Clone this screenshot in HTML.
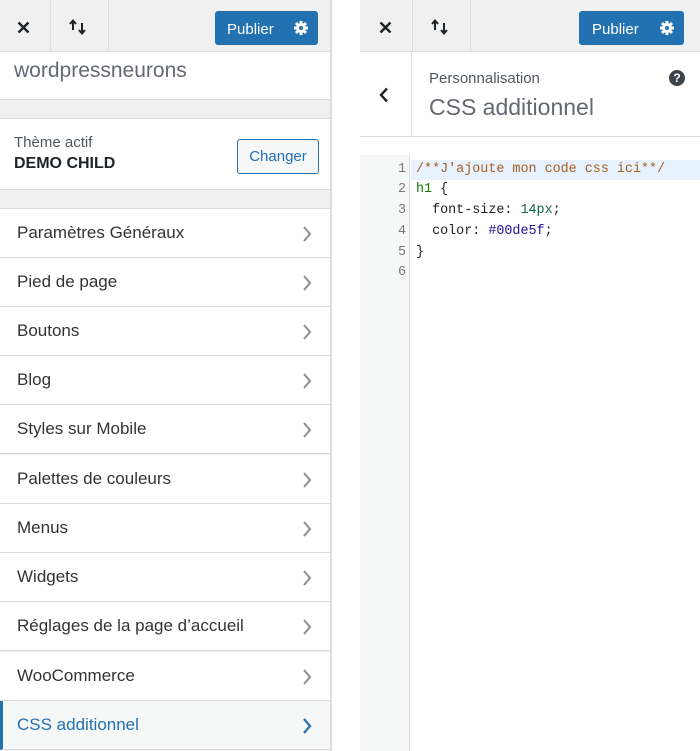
<!DOCTYPE html>
<html><head><meta charset="utf-8"><style>
*{margin:0;padding:0;box-sizing:border-box}
body{width:700px;height:751px;overflow:hidden;background:#fff;font-family:"Liberation Sans","DejaVu Sans",sans-serif;position:relative;color:#3c434a}
.abs{position:absolute}
.hdr{background:#f0f0f1;height:52px;border-bottom:1px solid #dcdcde}
.sep{position:absolute;top:0;width:1px;height:52px;background:#dcdcde}
.pub{position:absolute;top:11px;height:34px;background:#2271b1;border-radius:3px;color:#fff;font-size:15px;display:flex;align-items:center;padding-left:12px;padding-top:2px}
.item{position:absolute;left:0;width:330px;height:49px;border-bottom:1px solid #dcdcde;background:#fff;font-size:17px;line-height:48px;padding-left:17px;color:#333}
.chev{position:absolute;right:18px;top:17px}
.code{position:absolute;left:416px;font-family:"Liberation Mono","DejaVu Sans Mono",monospace;font-size:13.4px;color:#222;white-space:pre}
.ln{position:absolute;left:360px;width:46px;text-align:right;font-family:"Liberation Mono",monospace;font-size:13.4px;color:#777}
</style></head><body>
<div class="abs" style="left:0;top:0;width:332px;height:751px;background:#f0f0f1;border-right:2px solid #dcdcde"></div>
<div class="abs hdr" style="left:0;top:0;width:330px"></div>
<div class="sep" style="left:50px"></div><div class="sep" style="left:108px"></div>
<svg class="abs" style="left:17px;top:21px" width="13" height="13" viewBox="0 0 13 13"><path d="M1.5 1.5L11.5 11.5M11.5 1.5L1.5 11.5" stroke="#1d2327" stroke-width="2.4"/></svg>
<svg class="abs" style="left:68px;top:18px" width="22" height="18" viewBox="0 0 22 18"><path d="M5 12V3M2 6L5 2.5L8 6M14 5v10M11 12L14 15.5L17 12" stroke="#1d2327" stroke-width="2" fill="none"/></svg>
<div class="pub" style="left:215px;width:103px">Publier</div>
<svg class="abs" style="left:293px;top:20px" width="16" height="16" viewBox="0 0 16 16"><circle cx="8" cy="8" r="5" fill="#fff"/><g stroke="#fff" stroke-width="3"><path d="M8 1v14M1 8h14M3 3l10 10M13 3L3 13"/></g><circle cx="8" cy="8" r="2" fill="#2271b1"/></svg>
<div class="abs" style="left:0;top:52px;width:330px;height:48px;background:#fff;border-bottom:1px solid #dcdcde"></div>
<div class="abs" style="left:14px;top:59px;font-size:21px;color:#646970">wordpressneurons</div>
<div class="abs" style="left:0;top:118px;width:330px;height:72px;background:#fff;border-top:1px solid #dcdcde;border-bottom:1px solid #dcdcde"></div>
<div class="abs" style="left:14px;top:134px;font-size:15px;color:#50575e">Thème actif</div>
<div class="abs" style="left:14px;top:155px;font-size:16px;font-weight:bold;color:#1d2327">DEMO CHILD</div>
<div class="abs" style="left:237px;top:139px;width:82px;height:35px;border:1px solid #2271b1;border-radius:3px;background:#f6f7f7;color:#2271b1;font-size:15px;line-height:33px;text-align:center">Changer</div>
<div class="abs" style="left:0;top:208px;width:330px;height:1px;background:#dcdcde"></div>
<div class="item" style="top:209px">Paramètres Généraux<svg class="chev" width="10" height="16"><path d="M2 1l6 7-6 7" stroke="#8c8f94" stroke-width="2" fill="none"/></svg></div>
<div class="item" style="top:258px">Pied de page<svg class="chev" width="10" height="16"><path d="M2 1l6 7-6 7" stroke="#8c8f94" stroke-width="2" fill="none"/></svg></div>
<div class="item" style="top:307px">Boutons<svg class="chev" width="10" height="16"><path d="M2 1l6 7-6 7" stroke="#8c8f94" stroke-width="2" fill="none"/></svg></div>
<div class="item" style="top:356px">Blog<svg class="chev" width="10" height="16"><path d="M2 1l6 7-6 7" stroke="#8c8f94" stroke-width="2" fill="none"/></svg></div>
<div class="item" style="top:405px">Styles sur Mobile<svg class="chev" width="10" height="16"><path d="M2 1l6 7-6 7" stroke="#8c8f94" stroke-width="2" fill="none"/></svg></div>
<div class="item" style="top:455px">Palettes de couleurs<svg class="chev" width="10" height="16"><path d="M2 1l6 7-6 7" stroke="#8c8f94" stroke-width="2" fill="none"/></svg></div>
<div class="item" style="top:504px">Menus<svg class="chev" width="10" height="16"><path d="M2 1l6 7-6 7" stroke="#8c8f94" stroke-width="2" fill="none"/></svg></div>
<div class="item" style="top:553px">Widgets<svg class="chev" width="10" height="16"><path d="M2 1l6 7-6 7" stroke="#8c8f94" stroke-width="2" fill="none"/></svg></div>
<div class="item" style="top:602px">Réglages de la page d’accueil<svg class="chev" width="10" height="16"><path d="M2 1l6 7-6 7" stroke="#8c8f94" stroke-width="2" fill="none"/></svg></div>
<div class="item" style="top:652px">WooCommerce<svg class="chev" width="10" height="16"><path d="M2 1l6 7-6 7" stroke="#8c8f94" stroke-width="2" fill="none"/></svg></div>
<div class="item" style="top:701px;background:#f6f7f7;color:#2271b1;border-left:3px solid #2271b1;padding-left:14px">CSS additionnel<svg class="chev" width="10" height="16"><path d="M2 1l6 7-6 7" stroke="#2271b1" stroke-width="2.2" fill="none"/></svg></div>

<div class="abs hdr" style="left:360px;top:0;width:340px"></div>
<div class="sep" style="left:412px"></div><div class="sep" style="left:470px"></div>
<svg class="abs" style="left:379px;top:21px" width="13" height="13" viewBox="0 0 13 13"><path d="M1.5 1.5L11.5 11.5M11.5 1.5L1.5 11.5" stroke="#1d2327" stroke-width="2.4"/></svg>
<svg class="abs" style="left:430px;top:18px" width="22" height="18" viewBox="0 0 22 18"><path d="M5 12V3M2 6L5 2.5L8 6M14 5v10M11 12L14 15.5L17 12" stroke="#1d2327" stroke-width="2" fill="none"/></svg>
<div class="pub" style="left:579px;width:105px;padding-left:13px">Publier</div>
<svg class="abs" style="left:659px;top:20px" width="16" height="16" viewBox="0 0 16 16"><circle cx="8" cy="8" r="5" fill="#fff"/><g stroke="#fff" stroke-width="3"><path d="M8 1v14M1 8h14M3 3l10 10M13 3L3 13"/></g><circle cx="8" cy="8" r="2" fill="#2271b1"/></svg>
<div class="abs" style="left:360px;top:52px;width:340px;height:85px;border-bottom:1px solid #dcdcde;background:#fff"></div>
<div class="abs" style="left:411px;top:52px;width:1px;height:85px;background:#dcdcde"></div>
<svg class="abs" style="left:379px;top:87px" width="10" height="16"><path d="M8 1.5L2 8l6 6.5" stroke="#1d2327" stroke-width="2.4" fill="none"/></svg>
<div class="abs" style="left:429px;top:70px;font-size:15px;color:#50575e">Personnalisation</div>
<div class="abs" style="left:429px;top:94px;font-size:23px;color:#646970">CSS additionnel</div>
<div class="abs" style="left:669px;top:70px;width:16px;height:16px;border-radius:50%;background:#3c434a;color:#fff;font-size:12px;font-weight:bold;line-height:16px;text-align:center">?</div>
<div class="abs" style="left:360px;top:155px;width:50px;height:596px;background:#f6f7f7;border-right:1px solid #dcdcde"></div>
<div class="abs" style="left:411px;top:160px;width:289px;height:20px;background:#e8f2ff"></div>
<div class="ln" style="top:162px">1</div><div class="ln" style="top:182px">2</div><div class="ln" style="top:203px">3</div><div class="ln" style="top:224px">4</div><div class="ln" style="top:245px">5</div><div class="ln" style="top:265px">6</div>
<div class="code" style="top:162px;color:#a55f1f">/**J'ajoute mon code css ici**/</div>
<div class="code" style="top:182px"><span style="color:#117700">h1</span> {</div>
<div class="code" style="top:203px">  font-size: <span style="color:#116644">14px</span>;</div>
<div class="code" style="top:224px">  color: <span style="color:#221199">#00de5f</span>;</div>
<div class="code" style="top:245px">}</div>
</body></html>
